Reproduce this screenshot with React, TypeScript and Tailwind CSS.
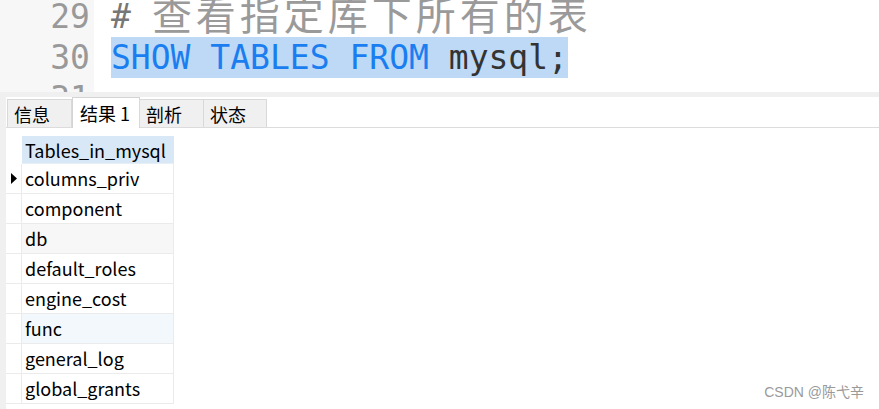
import React from "react";

const mono = { fontFamily: '"DejaVu Sans Mono", "Liberation Mono", "Noto Sans CJK SC", monospace' };
const ui = { fontFamily: '"Noto Sans CJK SC", "Noto Sans", sans-serif' };

const rows = [
  { name: "columns_priv", bg: "bg-white", current: true },
  { name: "component", bg: "bg-white" },
  { name: "db", bg: "bg-[#f7f7f7]" },
  { name: "default_roles", bg: "bg-white" },
  { name: "engine_cost", bg: "bg-white" },
  { name: "func", bg: "bg-[#f3f8fd]" },
  { name: "general_log", bg: "bg-white" },
  { name: "global_grants", bg: "bg-white" },
];

const tabs = [
  { label: "信息", w: "w-[65px]" },
  { label: "结果 1", w: "w-[68px]", active: true },
  { label: "剖析", w: "w-[65px]" },
  { label: "状态", w: "w-[64px]" },
];

export default function App() {
  return (
    <div className="w-[879px] h-[409px] overflow-hidden bg-white relative">
      {/* editor */}
      <div className="h-[92px] overflow-hidden flex text-[33px] leading-[41px]" style={mono}>
        <div className="w-[94px] bg-[#f7f7f7] text-[#999] text-right pr-[4px] -mt-[4px]">
          <div>29</div>
          <div>30</div>
          <div>31</div>
        </div>
        <div className="pl-[17px] -mt-[4px] whitespace-pre">
          <div className="flex items-start h-[41px] overflow-visible">
            <span className="text-[#777]">#</span>
            <span
              className="ml-[21px] -mt-[2px] text-[40px] leading-[38px] tracking-[4px] text-[#9a9a9a]"
              style={{ fontFamily: '"Noto Sans CJK SC", sans-serif' }}
            >
              查看指定库下所有的表
            </span>
          </div>
          <div className="bg-[#bdd9f6] w-fit">
            <span className="text-[#1b7ef0]">SHOW TABLES FROM </span>
            <span className="text-[#333]">mysql;</span>
          </div>
          <div>&nbsp;</div>
        </div>
      </div>
      <div className="h-[5px] bg-[#f0f0f0]" />

      {/* result panel */}
      <div className="flex h-[312px]" style={ui}>
        <div className="w-[6px] bg-[#f0f0f0]" />
        <div className="flex-1 flex flex-col">
          <div className="h-[31px] flex items-end pl-[1px] border-b border-[#dcdcdc]">
            {tabs.map((t) =>
              t.active ? (
                <div
                  key={t.label}
                  className={`${t.w} h-[31px] -mb-px bg-white border border-b-0 border-[#d4d4d4] pl-[7px] text-[18px] leading-[30px] text-black`}
                >
                  {t.label}
                </div>
              ) : (
                <div
                  key={t.label}
                  className={`${t.w} h-[28px] bg-[#f0f0f0] border border-b-0 border-[#d9d9d9] -ml-px first:ml-0 pl-[6px] text-[18px] leading-[28px] text-black`}
                >
                  {t.label}
                </div>
              )
            )}
          </div>

          <div className="pt-[8px] text-[18px] text-black">
            <div className="flex h-[28px]">
              <div className="w-[16px]" />
              <div className="w-[152px] bg-[#d9e8f7] pl-[3px] leading-[28px] border-b border-[#e6eef6]">
                Tables_in_mysql
              </div>
            </div>
            {rows.map((r) => (
              <div key={r.name} className="flex h-[30px] border-b border-[#ebebeb] w-[168px]">
                <div className="w-[16px] border-r border-[#ebebeb] flex items-center justify-center bg-white">
                  {r.current && (
                    <svg width="6" height="11" viewBox="0 0 6 11">
                      <path d="M0 0 L6 5.5 L0 11 Z" fill="#000" />
                    </svg>
                  )}
                </div>
                <div className={`w-[152px] ${r.bg} pl-[3px] leading-[29px] border-r border-[#ebebeb]`}>{r.name}</div>
              </div>
            ))}
          </div>
        </div>
      </div>

      <div
        className="absolute right-[15px] bottom-[6px] text-[14px] text-[#9a9a9a]"
        style={{ fontFamily: '"Liberation Sans", "Noto Sans CJK SC", sans-serif' }}
      >
        CSDN @陈弋辛
      </div>
    </div>
  );
}
